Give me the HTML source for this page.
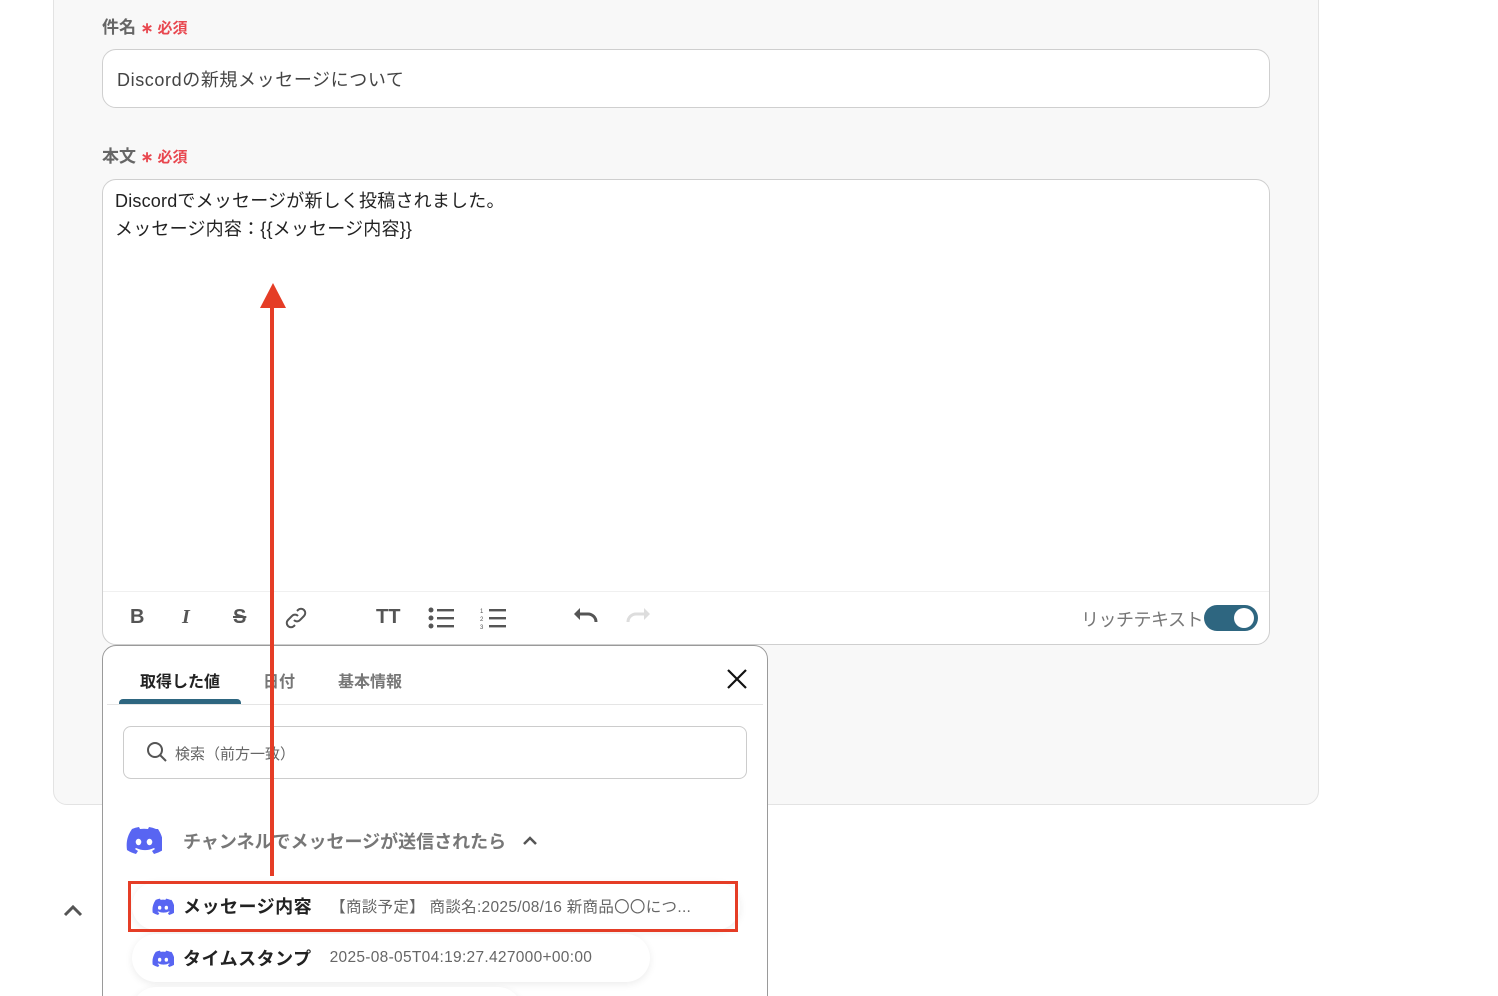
<!DOCTYPE html>
<html><head><meta charset="utf-8"><style>
*{box-sizing:border-box;margin:0;padding:0}
html,body{width:1498px;height:996px;overflow:hidden}
body{background:#fff;font-family:"Liberation Sans","Noto Sans CJK JP",sans-serif;position:relative;color:#333}
.panel{position:absolute;left:53px;top:-20px;width:1266px;height:825px;background:#f8f8f8;border:1px solid #e3e3e3;border-radius:0 0 14px 14px}
.lbl{position:absolute;left:102px;font-size:17px;color:#666;font-weight:bold}
.lbl span{color:#e8474f;font-size:15px}
.inp{position:absolute;left:102px;width:1168px;background:#fff;border:1px solid #cfcfcf;border-radius:14px}
.a{position:absolute}
.tb{font-size:20px;color:#555;font-weight:bold}
.pop{position:absolute;left:102px;top:645px;width:666px;height:360px;background:#fff;border:1px solid #9a9a9a;border-radius:14px 14px 0 0}
.item{position:absolute;background:#fff;border-radius:24px;box-shadow:0 2px 8px rgba(0,0,0,.08);height:48px;display:flex;align-items:center;padding-left:20px;font-size:18px}
.item b{color:#222;margin-left:9px;margin-right:18px;letter-spacing:.5px}
.item i{font-style:normal;color:#666;font-size:15.5px;letter-spacing:.3px}
</style></head><body>
<div class="panel"></div>
<div class="lbl" style="top:13px">件名 <span>∗ 必須</span></div>
<div class="inp" style="top:49px;height:59px"><div style="position:absolute;left:14px;top:16px;font-size:18px;color:#444;letter-spacing:.6px">Discordの新規メッセージについて</div></div>
<div class="lbl" style="top:142px">本文 <span>∗ 必須</span></div>
<div class="inp" style="top:179px;height:466px">
<div style="position:absolute;left:12px;top:7px;font-size:18px;color:#222;line-height:28px;letter-spacing:.2px">Discordでメッセージが新しく投稿されました。<br>メッセージ内容：{{メッセージ内容}}</div>
<div style="position:absolute;left:0;right:0;top:411px;border-top:1px solid #f0f0f0"></div>
</div>
<div class="a tb" style="left:130px;top:606px">B</div>
<div class="a tb" style="left:182px;top:606px;font-style:italic;font-family:'Liberation Serif',serif">I</div>
<div class="a tb" style="left:233px;top:606px;text-decoration:line-through">S</div>
<svg class="a" style="left:284px;top:606px" width="24" height="24" viewBox="0 0 24 24" fill="none" stroke="#555" stroke-width="2"><path d="M10 14a4 4 0 0 0 6 0l4-4a4 4 0 0 0-6-6l-1 1M14 10a4 4 0 0 0-6 0l-4 4a4 4 0 0 0 6 6l1-1"/></svg>
<div class="a tb" style="left:376px;top:606px">TT</div>
<svg class="a" style="left:428px;top:606px" width="28" height="24" viewBox="0 0 28 24" fill="#555"><circle cx="3" cy="4" r="2.5"/><circle cx="3" cy="12" r="2.5"/><circle cx="3" cy="20" r="2.5"/><rect x="9" y="3" width="17" height="2.4"/><rect x="9" y="11" width="17" height="2.4"/><rect x="9" y="19" width="17" height="2.4"/></svg>
<svg class="a" style="left:480px;top:606px" width="28" height="24" viewBox="0 0 28 24" fill="#555"><rect x="9" y="3" width="17" height="2.4"/><rect x="9" y="11" width="17" height="2.4"/><rect x="9" y="19" width="17" height="2.4"/><text x="0" y="7" font-size="6">1</text><text x="0" y="15" font-size="6">2</text><text x="0" y="23" font-size="6">3</text></svg>
<svg class="a" style="left:571px;top:606px" width="30" height="22" viewBox="0 0 30 22" fill="none" stroke="#555" stroke-width="3"><path d="M5 8h12a8 8 0 0 1 8 8"/><path d="M3 8l6-6v12z" fill="#555" stroke="none"/></svg>
<svg class="a" style="left:623px;top:606px" width="30" height="22" viewBox="0 0 30 22" fill="none" stroke="#ddd" stroke-width="3"><path d="M25 8H13a8 8 0 0 0-8 8"/><path d="M27 8l-6-6v12z" fill="#ddd" stroke="none"/></svg>
<div class="a" style="left:1081px;top:606px;font-size:18px;color:#777;letter-spacing:-.5px">リッチテキスト</div>
<div class="a" style="left:1204px;top:605px;width:54px;height:26px;border-radius:13px;background:#2e6680"><div style="position:absolute;right:4px;top:3px;width:20px;height:20px;border-radius:50%;background:#fff"></div></div>

<svg class="a" style="left:63px;top:903px" width="20" height="14" viewBox="0 0 20 14" fill="none" stroke="#555" stroke-width="3"><path d="M2 12l8-8 8 8"/></svg>
<div class="pop">
<div class="a" style="left:37px;top:22px;font-size:16px;color:#222;font-weight:bold">取得した値</div>
<div class="a" style="left:160px;top:22px;font-size:16px;color:#777;font-weight:bold">日付</div>
<div class="a" style="left:235px;top:22px;font-size:16px;color:#777;font-weight:bold">基本情報</div>
<div class="a" style="left:16px;top:53px;width:122px;height:6px;background:#2e6680;border-radius:4px 4px 0 0"></div>
<div class="a" style="left:4px;right:4px;top:58px;border-top:1px solid #e5e5e5"></div>
<svg class="a" style="left:623px;top:22px" width="22" height="22" viewBox="0 0 22 22" stroke="#111" stroke-width="2.2"><path d="M2 2l18 18M20 2L2 20"/></svg>
<div class="a" style="left:20px;top:80px;width:624px;height:53px;border:1px solid #ccc;border-radius:8px">
<svg class="a" style="left:22px;top:14px" width="22" height="22" viewBox="0 0 22 22" fill="none" stroke="#555" stroke-width="2"><circle cx="9" cy="9" r="7"/><path d="M14 14l6 6"/></svg>
<div class="a" style="left:51px;top:16px;font-size:15px;color:#666">検索（前方一致）</div></div>
<svg class="a" style="left:23px;top:180px" width="36" height="28" viewBox="0 0 36 28"><path fill="#5865f2" d="M30 3A29 29 0 0 0 23 1l-1 2a27 27 0 0 0-8 0l-1-2a29 29 0 0 0-7 2C1 10 0 17 1 24a29 29 0 0 0 9 4l2-3-3-2 1-1a21 21 0 0 0 18 0l1 1-3 2 2 3a29 29 0 0 0 9-4c1-8-1-15-5-21z"/><ellipse cx="12.5" cy="16" rx="2.8" ry="3.2" fill="#fff"/><ellipse cx="23.5" cy="16" rx="2.8" ry="3.2" fill="#fff"/></svg>
<div class="a" style="left:80px;top:182px;font-size:18px;color:#777;font-weight:bold">チャンネルでメッセージが送信されたら</div>
<svg class="a" style="left:420px;top:190px" width="14" height="10" viewBox="0 0 14 10" fill="none" stroke="#555" stroke-width="2.5"><path d="M1 8l6-6 6 6"/></svg>
</div>
<div class="item" style="left:132px;top:882px;width:608px"><svg width="22" height="17" viewBox="0 0 36 28"><path fill="#5865f2" d="M30 3A29 29 0 0 0 23 1l-1 2a27 27 0 0 0-8 0l-1-2a29 29 0 0 0-7 2C1 10 0 17 1 24a29 29 0 0 0 9 4l2-3-3-2 1-1a21 21 0 0 0 18 0l1 1-3 2 2 3a29 29 0 0 0 9-4c1-8-1-15-5-21z"/><ellipse cx="12.5" cy="16" rx="2.8" ry="3.2" fill="#fff"/><ellipse cx="23.5" cy="16" rx="2.8" ry="3.2" fill="#fff"/></svg><b>メッセージ内容</b><i>【商談予定】 商談名:2025/08/16 新商品〇〇につ...</i></div>
<div class="a" style="left:128px;top:881px;width:610px;height:51px;border:3px solid #e53d26"></div>
<div class="item" style="left:132px;top:934px;width:518px"><svg width="22" height="17" viewBox="0 0 36 28"><path fill="#5865f2" d="M30 3A29 29 0 0 0 23 1l-1 2a27 27 0 0 0-8 0l-1-2a29 29 0 0 0-7 2C1 10 0 17 1 24a29 29 0 0 0 9 4l2-3-3-2 1-1a21 21 0 0 0 18 0l1 1-3 2 2 3a29 29 0 0 0 9-4c1-8-1-15-5-21z"/><ellipse cx="12.5" cy="16" rx="2.8" ry="3.2" fill="#fff"/><ellipse cx="23.5" cy="16" rx="2.8" ry="3.2" fill="#fff"/></svg><b>タイムスタンプ</b><i>2025-08-05T04:19:27.427000+00:00</i></div>
<div class="item" style="left:132px;top:987px;width:390px"></div>

<div class="a" style="left:270px;top:300px;width:4px;height:576px;background:#e53d26"></div>
<svg class="a" style="left:259px;top:283px" width="28" height="26"><path d="M14 0L27 25H1z" fill="#e53d26"/></svg>
</body></html>
